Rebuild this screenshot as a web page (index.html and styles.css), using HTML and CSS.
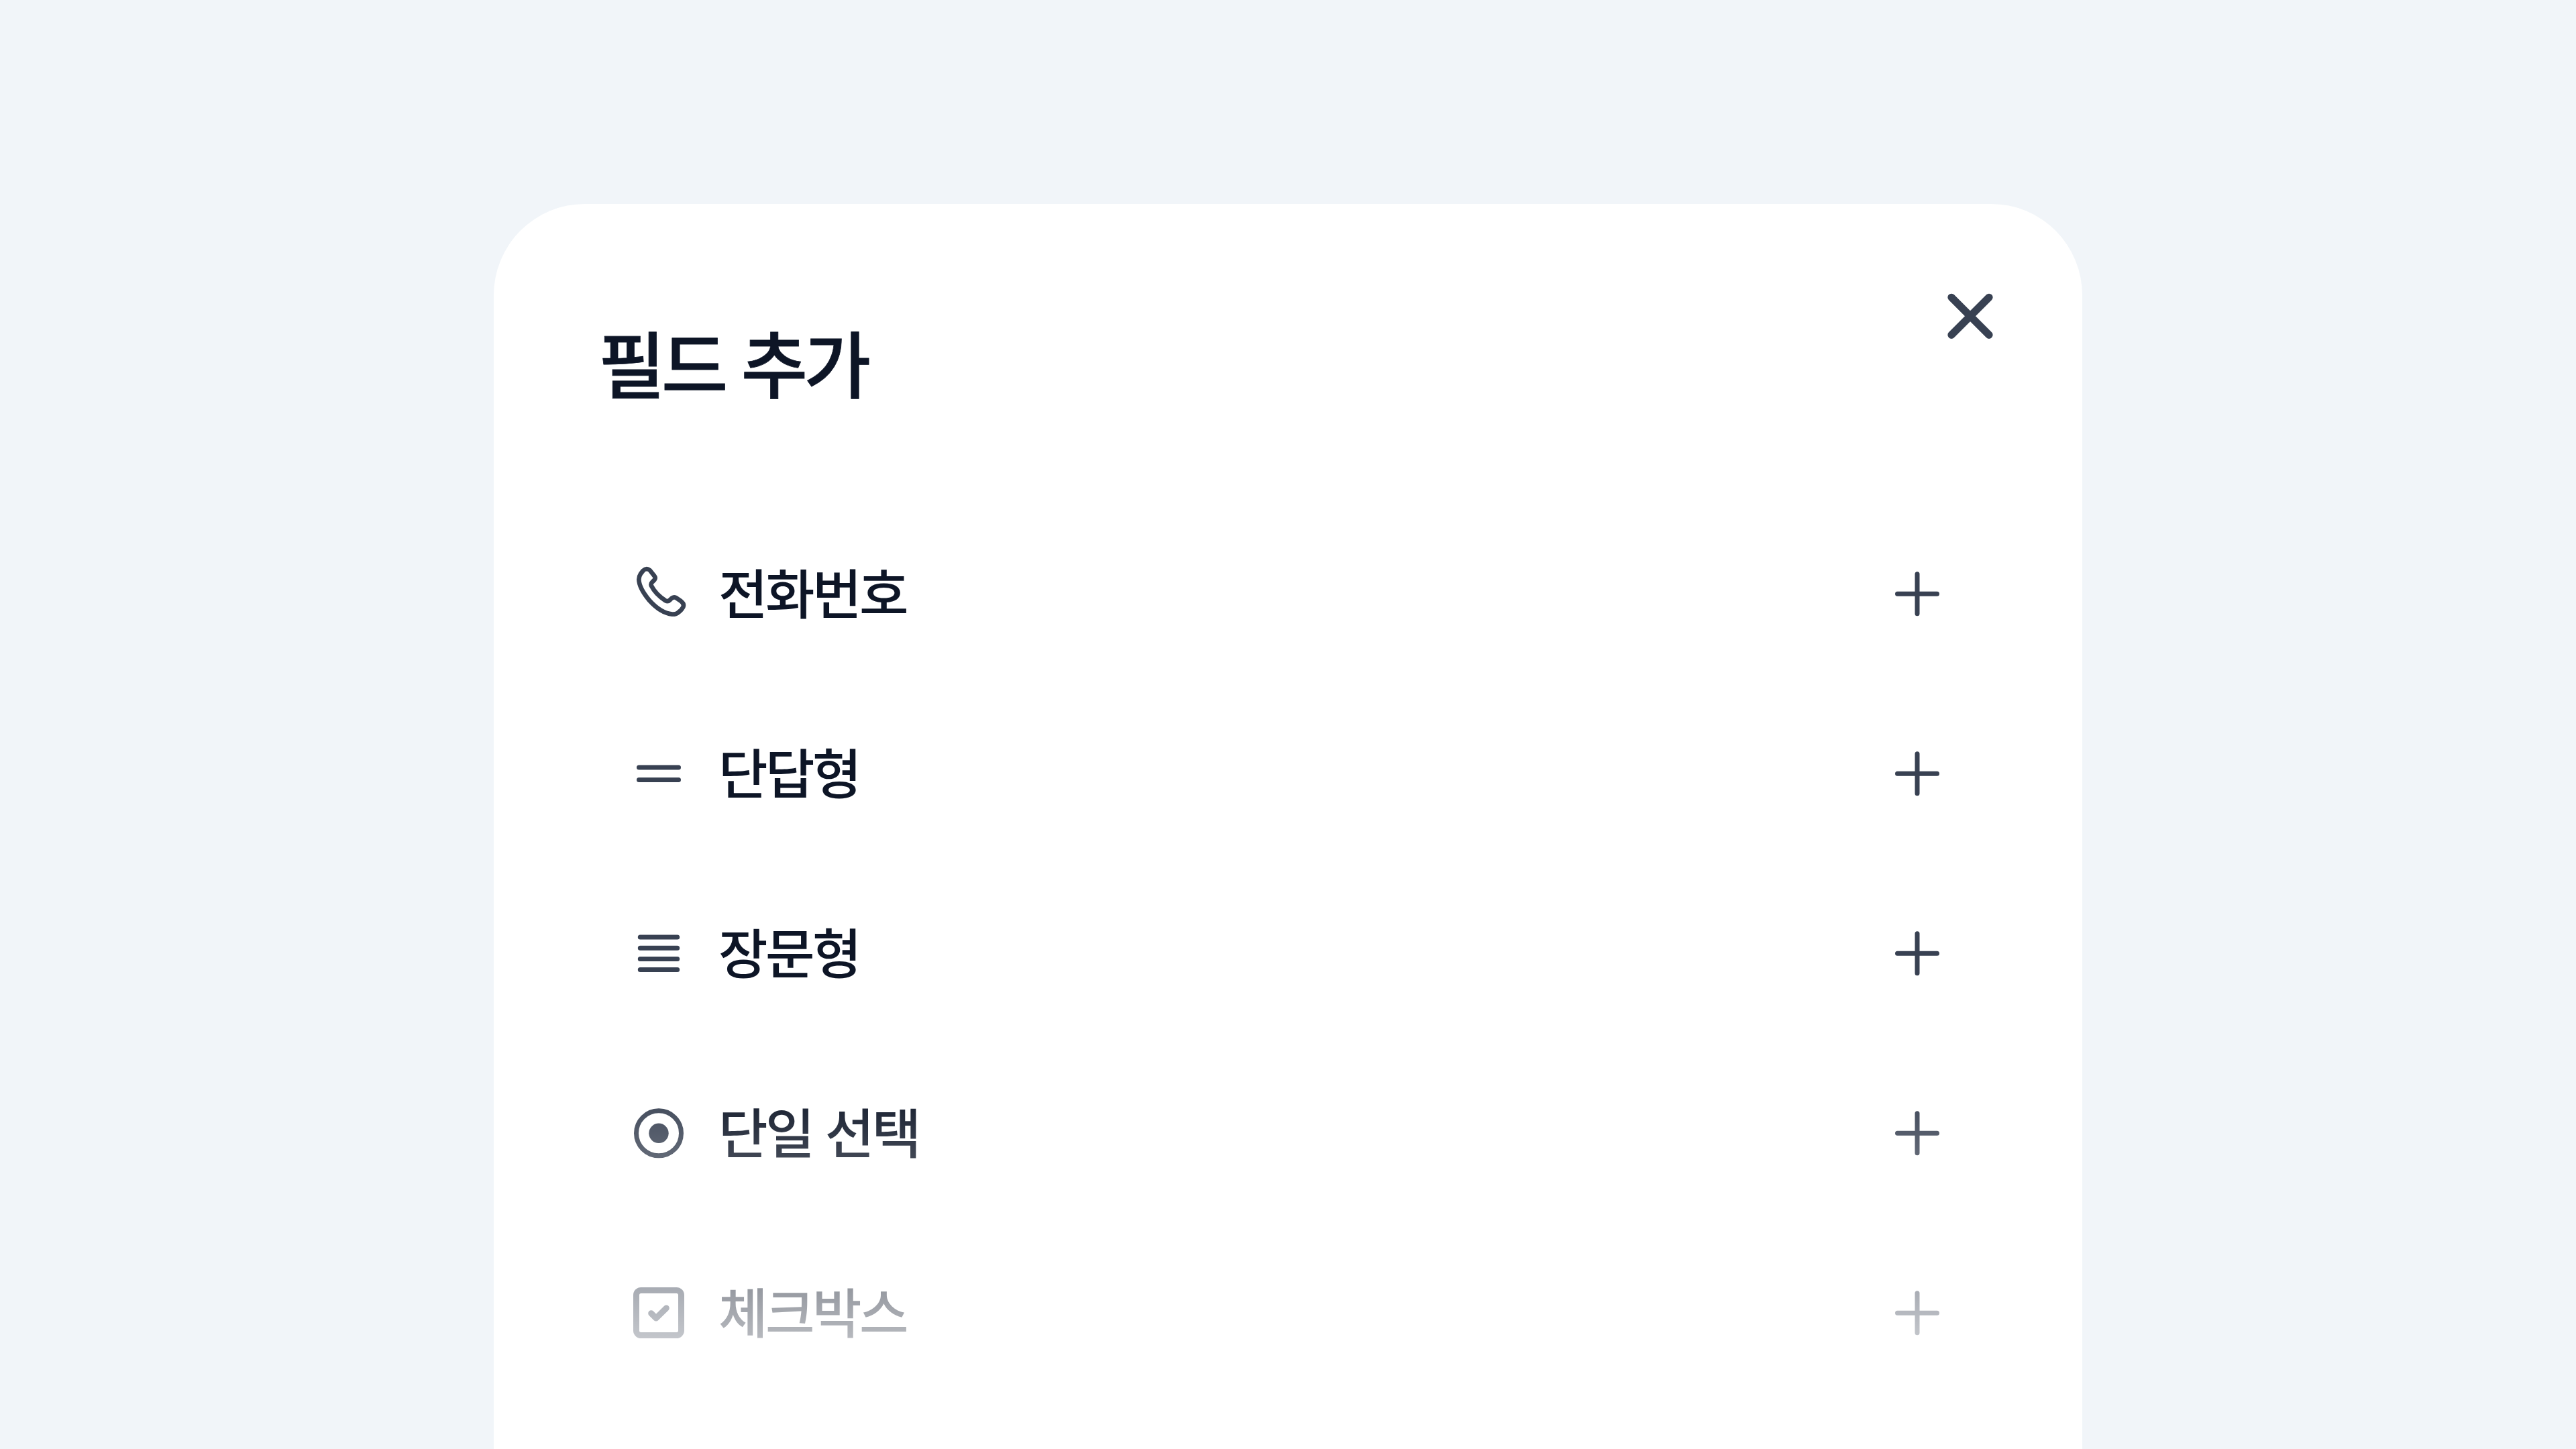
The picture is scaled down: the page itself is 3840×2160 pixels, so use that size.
FILE: index.html
```html
<!DOCTYPE html>
<html lang="ko">
<head>
    <meta charset="UTF-8">
    <meta name="viewport" content="width=device-width, initial-scale=1.0">
    <title>필드 추가</title>
    <link rel="stylesheet" href="styles.css">
</head>
<body>
    <div class="modal">
        <div class="modal-header">
            <h1>필드 추가</h1>
            <button class="close-btn" aria-label="닫기">
                <svg class="icon" viewBox="0 0 80 80"><path class="thick" d="M12 12.3L68 68.3M68 12.3L12 68.3"/></svg>
            </button>
        </div>

        <ul class="field-list">
            <li class="field-item">
                <svg class="icon" viewBox="66 75 240 240"><path class="phone" d="M146 90L166 115Q174 125 166 134L157 143Q149 151 153 160Q172 198 216 226Q227 232 235 224L243 216Q252 208 263 213L286 229Q301 240 295 255Q287 270 272 280Q262 288 246 287Q194 281 144 225Q98 170 97 131Q97 118 105 106L116 92Q131 78 146 90Z"/></svg>
                <span>전화번호</span>
                <svg class="icon" viewBox="0 0 80 80"><path d="M10.5 40.3H69.5M40 10.8V69.8"/></svg>
            </li>
            <li class="field-item">
                <svg class="icon" viewBox="0 0 80 80"><path d="M10.5 31H69.5M10.5 49.5H69.5"/></svg>
                <span>단답형</span>
                <svg class="icon" viewBox="0 0 80 80"><path d="M10.5 40.3H69.5M40 10.8V69.8"/></svg>
            </li>
            <li class="field-item">
                <svg class="icon" viewBox="0 0 80 80"><path d="M12.3 16H67.7M12.3 32.2H67.7M12.3 48.4H67.7M12.3 64.6H67.7"/></svg>
                <span>장문형</span>
                <svg class="icon" viewBox="0 0 80 80"><path d="M10.5 40.3H69.5M40 10.8V69.8"/></svg>
            </li>
            <li class="field-item">
                <svg class="icon" viewBox="0 0 80 80"><circle cx="40" cy="40.3" r="33.5"/><circle class="dot" cx="40" cy="40.3" r="14.7"/></svg>
                <span>단일 선택</span>
                <svg class="icon" viewBox="0 0 80 80"><path d="M10.5 40.3H69.5M40 10.8V69.8"/></svg>
            </li>
            <li class="field-item">
                <svg class="icon" viewBox="0 0 80 80"><rect class="check" x="6.5" y="6.5" width="67" height="67" rx="7"/><path class="check" d="M28.7 40.7L36 48L51.3 33"/></svg>
                <span>체크박스</span>
                <svg class="icon" viewBox="0 0 80 80"><path d="M10.5 40.3H69.5M40 10.8V69.8"/></svg>
            </li>
        </ul>

        <div class="fade"></div>
    </div>
</body>
</html>
```

FILE: styles.css
```css
* {
    box-sizing: border-box;
}

body {
    font-family: "Noto Sans CJK KR", sans-serif;
    margin: 0;
    height: 2160px;
    padding-top: 304px;
    background-color: #f1f5f9;
    color: #0d1526;
    overflow: hidden;
}

.modal {
    position: relative;
    width: 2368px;
    height: 1856px;
    margin: 0 auto;
    padding: 127px 127px 0 156px;
    background-color: #fff;
    border-radius: 136px 136px 0 0;
}

.modal-header {
    display: flex;
    justify-content: space-between;
    align-items: flex-start;
    height: 320px;
}

h1 {
    margin: 27px 0 0;
    font-size: 108px;
    line-height: 160px;
    font-weight: 500;
    letter-spacing: -5.4px;
    white-space: nowrap;
    -webkit-text-stroke: 0.8px #0d1526;
}

.close-btn {
    padding: 0;
    border: none;
    background: none;
    cursor: pointer;
}

.icon {
    display: block;
    flex: none;
    width: 80px;
    height: 80px;
    fill: none;
    stroke: #384152;
    stroke-width: 7;
    stroke-linecap: round;
    stroke-linejoin: round;
    overflow: visible;
}

.icon .thick {
    stroke-width: 11.3;
}

.icon .phone {
    stroke-width: 20;
}

.icon .check {
    stroke-width: 9;
}

.icon .dot {
    fill: #384152;
    stroke: none;
}

.field-list {
    list-style: none;
    margin: 0 33px 0 4px;
    padding: 0;
}

.field-item {
    display: flex;
    align-items: center;
    height: 268px;
    padding: 0 46px;
}

.field-item span {
    flex: 1;
    margin-left: 49px;
    padding-bottom: 10px;
    font-size: 80px;
    line-height: 120px;
    font-weight: 500;
    letter-spacing: -3.6px;
}

/* white fade over the end of the list */
.fade {
    position: absolute;
    left: 0;
    right: 0;
    bottom: 0;
    height: 550px;
    background: linear-gradient(rgba(255, 255, 255, 0), #fff);
    pointer-events: none;
}
```
